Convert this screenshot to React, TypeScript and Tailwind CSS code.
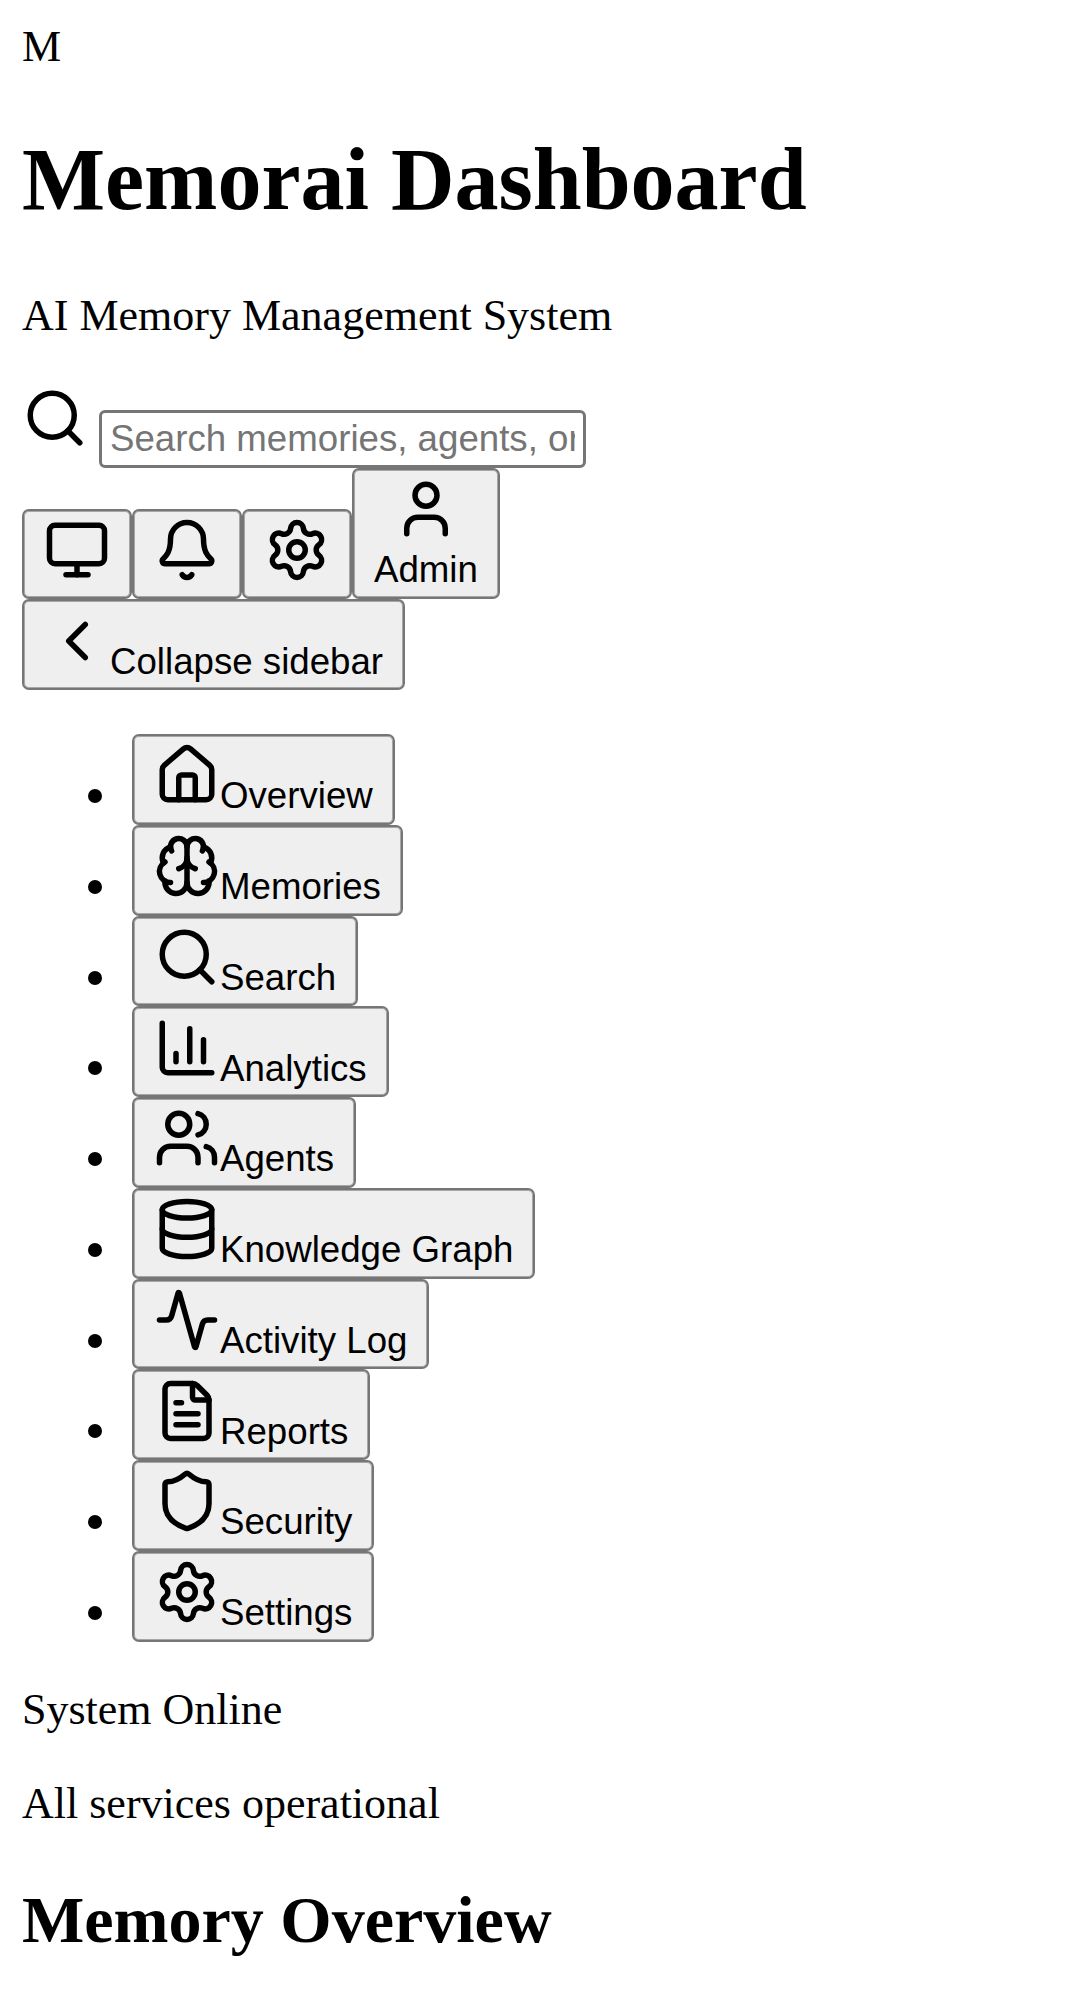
import React from "react";
import { Search, Monitor, Bell, Settings, User, ChevronLeft, House, Brain, ChartColumn, Users, Database, Activity, FileText, Shield } from "lucide-react";

const items = [
  { icon: House, label: "Overview" },
  { icon: Brain, label: "Memories" },
  { icon: Search, label: "Search" },
  { icon: ChartColumn, label: "Analytics" },
  { icon: Users, label: "Agents" },
  { icon: Database, label: "Knowledge Graph" },
  { icon: Activity, label: "Activity Log" },
  { icon: FileText, label: "Reports" },
  { icon: Shield, label: "Security" },
  { icon: Settings, label: "Settings" },
];

const buttonBase =
  "flex shrink-0 border-2 border-[#767676] rounded-[7px] bg-[#efefef] shadow-[inset_0_0_0_1px_#a6a6a6] px-5 pt-[6.25px] whitespace-nowrap font-['Liberation_Sans',Arial,sans-serif] text-[36.667px] leading-[42px] text-black";
const button = `${buttonBase} h-[90.75px] items-baseline`;
const icon = "block size-[66px] shrink-0";

export default function App() {
  return (
    <div className="h-[1999px] overflow-hidden bg-white p-[22px] font-['Liberation_Serif','Times_New_Roman',serif] text-[44px] leading-[50px] text-black">
      <header>
        <div>M</div>
        <h1 className="mt-[57px] mb-[61px] text-[88px] leading-[101px] font-bold">Memorai Dashboard</h1>
        <p className="my-[44px]">AI Memory Management System</p>
        <div className="flex h-[83px] items-start">
          <Search className={icon} />
          <input
            className="mt-[25px] ml-[11px] h-[58px] w-[487px] rounded-[6px] border-[3px] border-[#767676] bg-white px-2 font-['Liberation_Sans',Arial,sans-serif] text-[36.667px] leading-[42px] placeholder:text-[#757575]"
            placeholder="Search memories, agents, or patterns..."
          />
        </div>
        <div className="flex h-[131.25px] items-end">
          <button className={button}><Monitor className={icon} /></button>
          <button className={button}><Bell className={icon} /></button>
          <button className={button}><Settings className={icon} /></button>
          <button className={`${buttonBase} h-[131.25px] flex-col items-center`}>
            <User className={icon} />
            <span className="mt-[7px]">Admin</span>
          </button>
        </div>
      </header>
      <nav>
        <button className={button}><ChevronLeft className={icon} /><span>Collapse sidebar</span></button>
        <ul className="mt-[44px] mb-[43.5px] pl-[66px]">
          {items.map(({ icon: Icon, label }) => (
            <li key={label} className="flex items-start">
              <span className="mt-[55px] mr-[30px] size-[14px] shrink-0 rounded-full bg-black" />
              <button className={button}><Icon className={icon} /><span>{label}</span></button>
            </li>
          ))}
        </ul>
      </nav>
      <div>System Online</div>
      <p className="mt-[44px]">All services operational</p>
      <h2 className="mt-[53px] text-[66px] leading-[75px] font-bold">Memory Overview</h2>
    </div>
  );
}
